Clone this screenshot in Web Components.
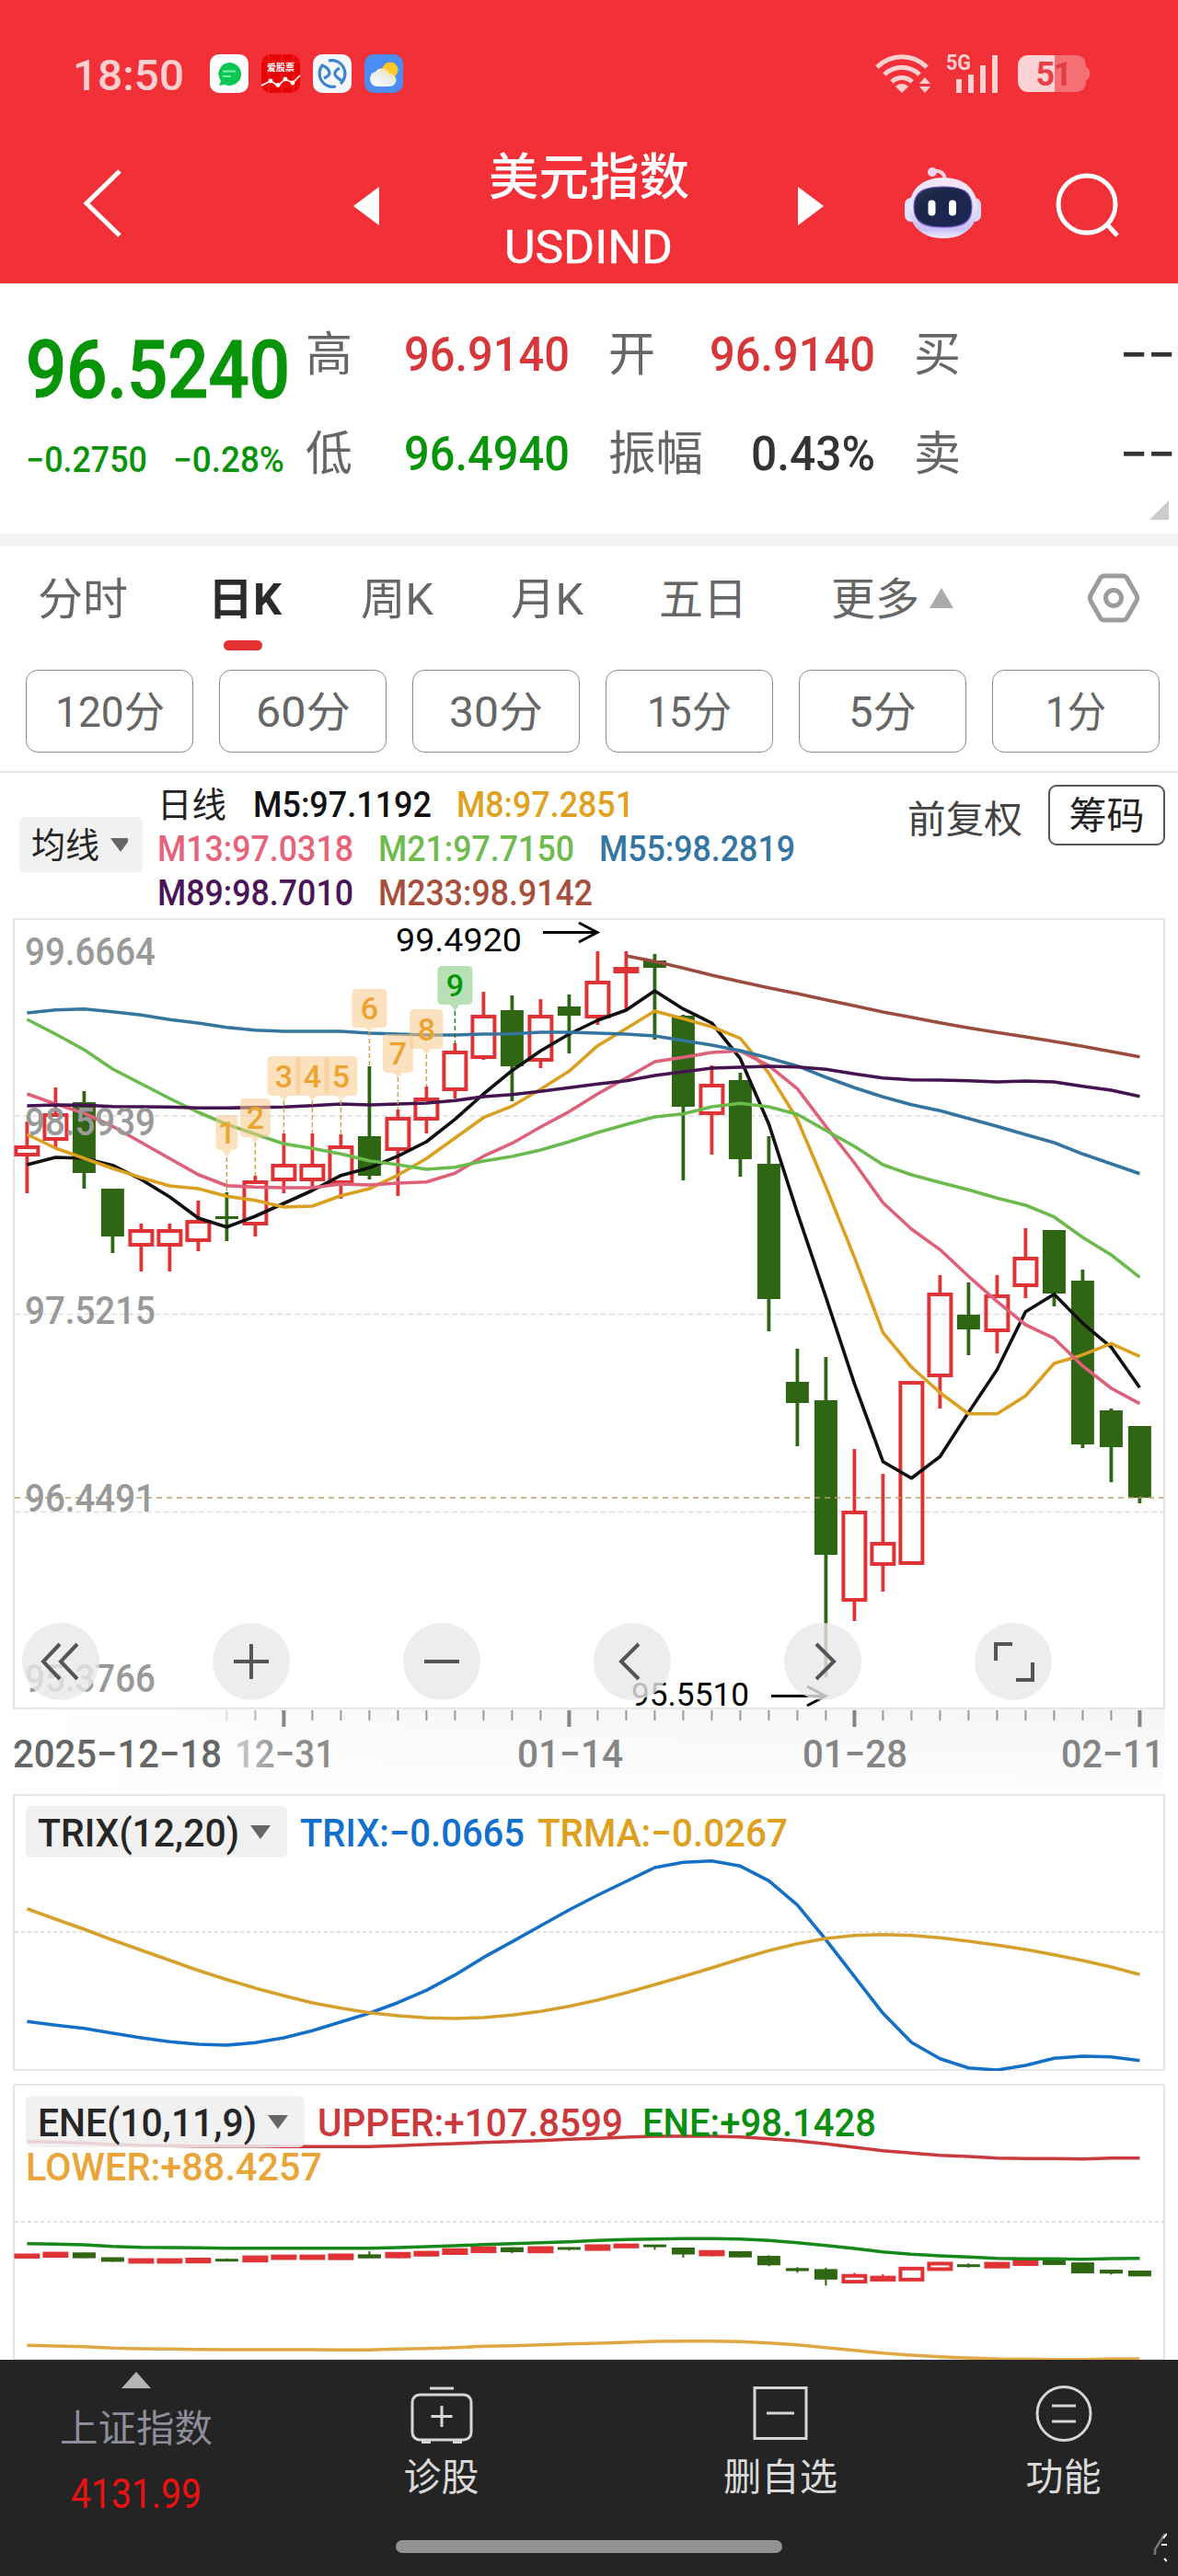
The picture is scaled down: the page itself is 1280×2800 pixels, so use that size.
<!DOCTYPE html>
<html lang="zh-CN">
<head>
<meta charset="utf-8">
<title>美元指数 USDIND</title>
<style>
    body {
        background: #fff;
        font-family: Roboto, "Noto Sans CJK SC", sans-serif;
        margin: 0;
        width: 1280px;
    }
</style>
</head>
<body>

<quote-app></quote-app>

<script>
const STEP = 31
const FIRST = 29.4
const px = i => FIRST + STEP * i

const RED = '#df3336'
const GREEN = '#2f6614'

// high, body top, body bottom, low, up (1) or down (0)
const candles = [
    [1219, 1245, 1257, 1297, 1], [1182, 1210, 1240, 1247, 1], [1186, 1198, 1275, 1292, 0], [1292, 1292, 1344, 1362, 0],
    [1330, 1336, 1355, 1382, 1], [1330, 1336, 1355, 1382, 1], [1305, 1326, 1350, 1360, 1], [1296, 1322, 1325, 1349, 0],
    [1278, 1283, 1332, 1344, 1], [1232, 1265, 1284, 1297, 1], [1232, 1265, 1284, 1292, 1], [1233, 1245, 1287, 1303, 1],
    [1159, 1235, 1278, 1282, 0], [1206, 1214, 1251, 1300, 1], [1181, 1193, 1218, 1232, 1], [1134, 1142, 1186, 1194, 1],
    [1078, 1103, 1151, 1152, 1], [1082, 1098, 1159, 1197, 0], [1086, 1103, 1154, 1161, 1], [1081, 1094, 1104, 1145, 0],
    [1034, 1066, 1107, 1114, 1], [1034, 1051, 1058, 1098, 1], [1037, 1044, 1052, 1130, 0], [1103, 1104, 1203, 1283, 0],
    [1158, 1178, 1212, 1255, 1], [1166, 1174, 1260, 1279, 0], [1235, 1265, 1412, 1447, 0], [1466, 1502, 1525, 1572, 0],
    [1475, 1522, 1690, 1823, 0], [1575, 1642, 1741, 1762, 1], [1602, 1676, 1702, 1730, 1], [1501, 1501, 1701, 1701, 1],
    [1386, 1405, 1497, 1531, 1], [1394, 1429, 1445, 1473, 0], [1386, 1407, 1448, 1471, 1], [1335, 1366, 1399, 1411, 1],
    [1337, 1337, 1406, 1420, 0], [1380, 1392, 1570, 1574, 0], [1531, 1533, 1573, 1611, 0], [1550, 1550, 1628, 1634, 0]
]

// line values are stored in thirds of a pixel below the pane origin
const averages = [
    { color: '#9c4c3f', from: 21, y: [147, 165, 187, 210, 231, 251, 270, 290, 310, 330, 347, 365, 382, 397, 411, 426, 442, 459, 476] },
    { color: '#101010', from: 0, y: [828, 804, 807, 830, 876, 933, 1002, 1031, 996, 954, 912, 863, 838, 800, 753, 680, 597, 521, 457, 402, 357, 324, 261, 320, 366, 482, 695, 985, 1260, 1542, 1796, 1850, 1780, 1636, 1496, 1307, 1250, 1345, 1423, 1555] },
    { color: '#dba01f', from: 0, y: [729, 774, 807, 840, 870, 897, 906, 931, 944, 966, 963, 929, 906, 862, 808, 741, 674, 637, 582, 523, 440, 384, 327, 352, 378, 416, 530, 680, 900, 1130, 1375, 1488, 1571, 1640, 1640, 1582, 1476, 1448, 1411, 1453] },
    { color: '#de6079', from: 0, y: [597, 630, 660, 703, 755, 808, 860, 896, 901, 903, 903, 891, 894, 888, 884, 856, 800, 758, 705, 655, 597, 545, 492, 478, 462, 457, 505, 580, 703, 822, 952, 1038, 1105, 1192, 1274, 1350, 1394, 1484, 1557, 1607] },
    { color: '#6bba4c', from: 0, y: [354, 402, 453, 516, 564, 612, 657, 696, 728, 760, 775, 793, 815, 828, 843, 836, 816, 801, 780, 753, 723, 697, 672, 662, 639, 628, 639, 664, 716, 768, 828, 861, 886, 910, 937, 960, 998, 1065, 1122, 1195] },
    { color: '#34759f', from: 0, y: [333, 323, 320, 329, 340, 355, 366, 380, 389, 393, 393, 393, 399, 402, 405, 405, 402, 401, 396, 396, 399, 402, 408, 423, 438, 456, 480, 506, 543, 577, 607, 632, 652, 677, 703, 730, 756, 793, 825, 857] },
    { color: '#441350', from: 0, y: [636, 633, 634, 638, 639, 640, 643, 643, 641, 640, 635, 630, 633, 630, 627, 619, 606, 599, 589, 577, 565, 554, 537, 525, 513, 510, 507, 509, 517, 532, 545, 551, 552, 554, 558, 555, 558, 572, 585, 605] }
]

const trixLines = [
    { color: '#146fc6', from: 0, y: [772, 784, 794, 810, 825, 838, 846, 849, 841, 825, 802, 773, 745, 710, 670, 620, 563, 512, 460, 408, 360, 315, 270, 253, 248, 265, 313, 392, 505, 625, 745, 840, 893, 923, 930, 915, 892, 885, 887, 899] },
    { color: '#d6a02c', from: 0, y: [404, 438, 471, 506, 539, 572, 605, 635, 663, 688, 711, 728, 743, 753, 760, 762, 759, 751, 739, 722, 702, 678, 652, 625, 597, 568, 541, 518, 501, 491, 488, 491, 499, 510, 523, 537, 554, 573, 594, 619] }
]

const eneLines = [
    { color: '#c9393e', from: 0, y: [203, 205, 208, 213, 216, 217, 218, 218, 218, 220, 220, 220, 220, 217, 213, 210, 206, 203, 200, 196, 193, 189, 186, 186, 186, 188, 194, 201, 211, 222, 233, 241, 248, 252, 257, 259, 259, 260, 257, 257] },
    { color: '#16881a', from: 0, y: [536, 538, 540, 545, 548, 549, 550, 551, 551, 551, 551, 551, 551, 549, 546, 543, 539, 536, 533, 530, 526, 523, 521, 520, 520, 521, 526, 533, 542, 552, 563, 571, 576, 580, 584, 586, 586, 587, 585, 584] },
    { color: '#e0a844', from: 0, y: [868, 870, 872, 877, 879, 880, 881, 882, 882, 882, 882, 883, 883, 880, 878, 875, 871, 869, 866, 863, 861, 858, 855, 854, 854, 856, 860, 866, 875, 884, 893, 900, 905, 909, 912, 913, 914, 914, 912, 912] }
]

// digit, candle index, top, shoulder, tip, width
const badges = [
    [1, 7, 1212, 1250, 1258, 24], [2, 8, 1194, 1236, 1242, 33], [3, 9, 1148, 1191, 1196, 36],
    [4, 10, 1148, 1191, 1196, 36], [5, 11, 1148, 1191, 1196, 36], [6, 12, 1075, 1117, 1121, 38],
    [7, 13, 1124, 1166, 1171, 33], [8, 14, 1097, 1140, 1146, 36], [9, 15, 1050, 1092, 1099, 38]
]

const drawLines = (lines, origin) => lines.map(l =>
    `<polyline fill="none" stroke="${l.color}" stroke-width="3.6" stroke-linejoin="round" points="${l.y.map((v, i) => `${px(i + l.from).toFixed(1)},${(origin + v / 3).toFixed(1)}`).join(' ')}"/>`
).join('')

const drawCandles = (list, wick, border) => list.map(([h, t, b, l, up], i) => {
    const x = px(i)
    if (!up) {
        return `<path stroke="${GREEN}" stroke-width="${wick}" d="M${x} ${h}V${l}"/>
            <rect x="${x - 12.5}" y="${t}" width="25" height="${Math.max(b - t, 3)}" fill="${GREEN}"/>`
    }
    const half = border / 2
    return `<path stroke="${RED}" stroke-width="${wick}" d="M${x} ${h}V${t + half}M${x} ${b - half}V${l}"/>
        <rect x="${x - 13 + half / 2}" y="${t + half}" width="${26 - half}" height="${Math.max(b - t - border, 1)}" fill="none" stroke="${RED}" stroke-width="${border}"/>`
}).join('')

// x, baseline, width, size, colour
const label = (text, x, y, w, size, color, weight = 400) =>
    `<text x="${x}" y="${y}" textLength="${w}" lengthAdjust="spacingAndGlyphs" font-size="${size}" font-weight="${weight}" fill="${color}">${text}</text>`


class BaseElement extends HTMLElement {

    constructor() {
        super()
        this.shadow = this.attachShadow({ mode: 'open' })
    }

    connectedCallback() {
        this.render()
    }
}


// Text squeezed or stretched to a given width
class FitText extends BaseElement {

    render() {
        const size = this.getAttribute('size')
        this.shadow.innerHTML =
            /*html*/
            `
            <style>
                :host{
                display: block;
                flex: none;
                font-size: ${size}px;
                line-height: 1.2;
                white-space: nowrap;
                }

                span{
                display: inline-block;
                transform: translateY(2px);
                transform-origin: 0 50%;
                vertical-align: top;
                }
            </style>
            <span><slot></slot></span>
            `
        const w = Number(this.getAttribute('w'))
        if (!w) return
        const span = this.shadow.querySelector('span')
        const natural = span.getBoundingClientRect().width
        this.style.width = w + 'px'
        if (natural) span.style.transform = `translateY(2px) scaleX(${w / natural})`
    }
}


class StatusBar extends BaseElement {

    render() {
        this.shadow.innerHTML =
            /*html*/
            `
            <style>
                :host{
                align-items: center;
                box-sizing: border-box;
                color: #fccfd1;
                display: flex;
                height: 160px;
                padding: 0 96px 0 79px;
                }

                svg{
                overflow: visible;
                }

                .apps{
                display: flex;
                gap: 14px;
                margin-left: 26px;
                }

                .system{
                align-items: center;
                display: flex;
                margin-left: auto;
                }

                .mobile{
                margin: 0 20px 0 17px;
                }
            </style>

            <fit-text w="121" size="47" style="font-weight: 500">18:50</fit-text>
            <div class="apps" style="margin-left: 28px">
                <svg width="42" height="42" viewBox="0 0 42 42">
                    <rect width="42" height="42" rx="10" fill="#fff"/>
                    <path d="M21 9a13 12.500 0 1 1-5 24l-6 1 2-5A12.500 12.500 0 0 1 21 9z" fill="#08c755"/>
                    <path d="M14 18.500h14M14 24h9" stroke="#86ebac" stroke-width="2"/>
                </svg>
                <svg width="42" height="42" viewBox="0 0 42 42">
                    <rect width="42" height="42" rx="10" fill="#e70606"/>
                    <path d="M0 8h42M0 34h42M8 0v42M22 0v42M35 0v42" stroke="#f33" stroke-width=".6"/>
                    <text x="6" y="18" textLength="30" lengthAdjust="spacingAndGlyphs" font-size="10" font-weight="700" fill="#fff">爱股票</text>
                    <path d="M0 34l10-5 8 5 8-7 8 4 8-8" fill="none" stroke="#fff" stroke-width="1.600"/>
                    <g fill="#fff"><circle cx="10" cy="29" r="2.400"/><circle cx="18" cy="33.500" r="2.400"/><circle cx="26" cy="27" r="2.400"/><circle cx="34" cy="31" r="2.400"/></g>
                </svg>
                <svg width="42" height="42" viewBox="0 0 42 42">
                    <rect width="42" height="42" rx="10" fill="#f6f8fc"/>
                    <path d="M17 7a14.500 14.500 0 0 1 13 25M25 35A14.500 14.500 0 0 1 11 11" fill="none" stroke="#3e84cf" stroke-width="3.200"/>
                    <path d="M10 12c5 2 8 5 8 9q-1 3-6 5" fill="none" stroke="#3e84cf" stroke-width="3.200"/>
                    <path d="M29 15q-6 3-5 7 2 4 8 7" fill="none" stroke="#3e84cf" stroke-width="3.200"/>
                </svg>
                <svg width="42" height="42" viewBox="0 0 42 42">
                    <defs>
                        <linearGradient id="cloud" x1="1" y1="0" x2="0" y2="1">
                            <stop offset="0" stop-color="#ffd977"/><stop offset=".5" stop-color="#e9efef"/><stop offset="1" stop-color="#fff"/>
                        </linearGradient>
                    </defs>
                    <rect width="42" height="42" rx="10" fill="#4b8cf2"/>
                    <circle cx="28" cy="17" r="8.500" fill="#ffc928"/>
                    <path d="M14 35a8 8 0 0 1-8-8 8 8 0 0 1 6-8 8.500 8.500 0 0 1 15 2 7 7 0 0 1 1 14z" fill="url(#cloud)"/>
                </svg>
            </div>
            <div class="system">
                <svg width="60" height="44" viewBox="0 0 60 44" fill="none" stroke="#fccfd1">
                    <path d="M2 15a38 38 0 0 1 54 0" stroke-width="5"/>
                    <path d="M10 23a27 27 0 0 1 38 0" stroke-width="5"/>
                    <path d="M18 31a16 16 0 0 1 22 0" stroke-width="5"/>
                    <path d="M22 36q7-6 14 0l-7 7z" fill="#fccfd1" stroke="none"/>
                    <path d="M48 33l6-7 6 7zM48 36l6 7 6-7z" fill="#fccfd1" stroke="none"/>
                </svg>
                <svg class="mobile" width="58" height="44" viewBox="0 0 58 44">
                    <text x="0" y="18" textLength="27" lengthAdjust="spacingAndGlyphs" font-size="24" font-weight="700" fill="#fccfd1">5G</text>
                    <path d="M14 43V28M27 43V23M40 43V13M53 43V2" stroke="#fccfd1" stroke-width="6"/>
                </svg>
                <svg width="78" height="40" viewBox="0 0 78 40">
                    <path d="M11 0h29v40H11A11 11 0 0 1 0 29V11A11 11 0 0 1 11 0z" fill="#fdd3d5"/>
                    <path d="M40 0h24a10 10 0 0 1 10 10v3q4 0 4 7t-4 7v3a10 10 0 0 1-10 10H40z" fill="#f67076"/>
                    <text x="19.500" y="33" font-size="36" font-weight="700" fill="#ea3d45">5</text>
                    <text x="38.500" y="33" font-size="36" font-weight="700" fill="#e33c44">1</text>
                </svg>
            </div>
            `
    }
}


class NavBar extends BaseElement {

    render() {
        this.shadow.innerHTML =
            /*html*/
            `
            <style>
                :host{
                align-items: center;
                box-sizing: border-box;
                color: #fff;
                display: flex;
                height: 148px;
                padding: 0 62px 11px 89px;
                }

                svg{
                display: block;
                flex: none;
                }

                .title{
                align-items: center;
                display: flex;
                flex-direction: column;
                width: 455px;
                }
            </style>

            <svg width="44" height="76" viewBox="0 0 44 76" style="margin: -16px 251px 0 0">
                <path d="M41 3L5 38l36 35" fill="none" stroke="#fff" stroke-width="5"/>
            </svg>
            <svg width="28" height="42" viewBox="0 0 28 42" style="margin-top: -9px"><path d="M28 0v42L0 21z" fill="#fff"/></svg>
            <div class="title">
                <fit-text w="218" size="54" style="font-weight: 500">美元指数</fit-text>
                <fit-text w="183" size="50" style="margin-top: 12px; -webkit-text-stroke: .5px #fff">USDIND</fit-text>
            </div>
            <svg width="28" height="42" viewBox="0 0 28 42" style="margin-top: -9px"><path d="M0 0v42l28-21z" fill="#fff"/></svg>
            <svg width="86" height="80" viewBox="0 0 86 80" style="margin: -15px 0 0 87px">
                <defs>
                    <linearGradient id="head" x1="0" y1="0" x2="0" y2="1">
                        <stop offset="0" stop-color="#f6e6f6"/><stop offset=".5" stop-color="#e6e4fb"/><stop offset=".85" stop-color="#c9bff6"/><stop offset="1" stop-color="#f3eefb"/>
                    </linearGradient>
                    <linearGradient id="face" x1="0" y1="0" x2="1" y2="1">
                        <stop offset="0" stop-color="#2a3558"/><stop offset=".3" stop-color="#1b2548"/><stop offset="1" stop-color="#1d2858"/>
                    </linearGradient>
                </defs>
                <path d="M31 5q13-2 14 10" fill="none" stroke="#f6d0e2" stroke-width="4"/>
                <circle cx="31" cy="6" r="5" fill="#ead5f2"/>
                <rect x="1" y="34" width="14" height="26" rx="7" fill="#e6e2fb"/>
                <rect x="70" y="34" width="14" height="26" rx="7" fill="#dcd6f9"/>
                <path d="M43 12c24 0 37 14 37 33S67 78 43 78 6 64 6 45s13-33 37-33z" fill="url(#head)"/>
                <path d="M43 22c21 0 31 5 31 22S64 66 43 66 11 61 11 44s11-22 32-22z" fill="url(#face)" stroke="#7358c9" stroke-width="1.200"/>
                <path d="M30.500 40.500v9M53 40.500v9" stroke="#fff" stroke-width="8" stroke-linecap="round"/>
            </svg>
            <svg width="72" height="70" viewBox="0 0 72 70" style="margin: -11px 0 0 auto">
                <circle cx="35" cy="34" r="31" fill="none" stroke="#fff" stroke-width="5"/>
                <path d="M57 56l11 12" stroke="#fff" stroke-width="5"/>
            </svg>
            `
    }
}


class QuotePanel extends BaseElement {

    render() {
        this.shadow.innerHTML =
            /*html*/
            `
            <style>
                :host{
                border-bottom: 14px solid #f4f4f4;
                box-sizing: border-box;
                color: #333;
                display: block;
                height: 286px;
                padding: 22px 0 0 28px;
                position: relative;
                }

                .row{
                align-items: center;
                display: grid;
                grid-template-columns: 304px 287px 42px 290px 42px 284px;
                grid-template-rows: 108px;
                }

                .cell{
                align-items: center;
                display: flex;
                justify-content: space-between;
                }

                .cell:nth-child(3){ grid-column: 4; }
                .cell:nth-child(4){ grid-column: 6; }

                .name{ color: #666; }
                .value{ font-weight: 500; }
                .up{ color: #d5373a; }
                .down{ color: #089408; }

                .price{
                -webkit-text-stroke: 1.200px;
                font-weight: 500;
                padding-top: 32px;
                }

                .change{
                display: flex;
                gap: 28px;
                padding-top: 14px;
                }

                .corner{
                bottom: 15px;
                position: absolute;
                right: 10px;
                }
            </style>

            <div class="row">
                <fit-text class="price down" w="287" size="88">96.5240</fit-text>
                <div class="cell"><fit-text class="name" size="51">高</fit-text><fit-text class="value up" w="180" size="51">96.9140</fit-text></div>
                <div class="cell"><fit-text class="name" size="51">开</fit-text><fit-text class="value up" w="180" size="51">96.9140</fit-text></div>
                <div class="cell"><fit-text class="name" size="51">买</fit-text><fit-text class="value" w="60" size="51">−−</fit-text></div>
            </div>
            <div class="row">
                <div class="change down">
                    <fit-text w="132" size="38" style="font-weight: 500">−0.2750</fit-text>
                    <fit-text w="121" size="38" style="font-weight: 500">−0.28%</fit-text>
                </div>
                <div class="cell"><fit-text class="name" size="51">低</fit-text><fit-text class="value down" w="180" size="51">96.4940</fit-text></div>
                <div class="cell"><fit-text class="name" w="103" size="51">振幅</fit-text><fit-text class="value" w="135" size="51">0.43%</fit-text></div>
                <div class="cell"><fit-text class="name" size="51">卖</fit-text><fit-text class="value" w="60" size="51">−−</fit-text></div>
            </div>
            <svg class="corner" width="21" height="21"><path d="M21 0v21H0z" fill="#ccc"/></svg>
            `
    }
}


class PeriodTabs extends BaseElement {

    render() {
        const minutes = [['120分', 119], ['60分', 103], ['30分', 102], ['15分', 92], ['5分', 74], ['1分', 66]]
        this.shadow.innerHTML =
            /*html*/
            `
            <style>
                :host{
                border-bottom: 2px solid #e6e6e6;
                box-sizing: border-box;
                color: #666;
                display: flow-root;
                height: 246px;
                }

                .tabs{
                align-items: center;
                box-sizing: border-box;
                display: flex;
                height: 114px;
                padding: 0 41px 2px;
                }

                .active{
                color: #2b2b2b;
                font-weight: 700;
                position: relative;
                }

                .active::after{
                background: #e33030;
                border-radius: 6px;
                bottom: -28px;
                content: '';
                height: 11px;
                left: 17px;
                position: absolute;
                width: 42px;
                }

                .minutes{
                display: grid;
                gap: 28px;
                grid-template-columns: repeat(6, 182px);
                margin: 20px 0 0 28px;
                }

                .minutes div{
                align-items: center;
                border: 1.500px solid #8c8c8c;
                border-radius: 13px;
                box-sizing: border-box;
                display: flex;
                height: 90px;
                justify-content: center;
                }
            </style>

            <div class="tabs">
                <fit-text w="98" size="48">分时</fit-text>
                <fit-text class="active" w="80" size="48" style="margin-left: 87px">日K</fit-text>
                <fit-text w="79" size="48" style="margin-left: 86px">周K</fit-text>
                <fit-text w="79" size="48" style="margin-left: 84px">月K</fit-text>
                <fit-text w="96" size="48" style="margin-left: 82px">五日</fit-text>
                <fit-text w="96" size="48" style="margin-left: 91px">更多</fit-text>
                <svg width="26" height="22" style="margin: 0 0 0 11px"><path d="M13 0l13 22H0z" fill="#ababab"/></svg>
                <svg width="58" height="54" viewBox="0 0 58 54" fill="none" stroke="#9c9c9c" stroke-width="5" style="margin-left: auto">
                    <path d="M19 3h20q3 0 4.500 2.500L54 24q1.500 3 0 6L43.500 48.500Q42 51 39 51H19q-3 0-4.500-2.500L4 30q-1.500-3 0-6L14.500 5.500Q16 3 19 3z"/>
                    <circle cx="29" cy="27" r="8.500"/>
                </svg>
            </div>
            <div class="minutes">
                ${minutes.map(([t, w]) => `<div><fit-text w="${w}" size="46">${t}</fit-text></div>`).join('')}
            </div>
            `
    }
}


// Grey pill with a drop-down arrow
class DropButton extends BaseElement {

    render() {
        this.shadow.innerHTML =
            /*html*/
            `
            <style>
                :host{
                align-items: center;
                background: rgba(238, 238, 238, .85);
                border-radius: 6px;
                box-sizing: border-box;
                color: #262626;
                display: flex;
                flex: none;
                gap: 12px;
                padding: 0 16px 0 13px;
                }
            </style>
            <slot></slot>
            <svg width="22" height="15"><path d="M0 0h22L11 15z" fill="#666"/></svg>
            `
    }
}


class AverageLegend extends BaseElement {

    render() {
        this.shadow.innerHTML =
            /*html*/
            `
            <style>
                :host{
                box-sizing: border-box;
                display: flex;
                height: 158px;
                padding: 10px 14px 0 21px;
                }

                drop-button{
                height: 60px;
                margin-top: 38px;
                width: 134px;
                }

                .lines{
                flex: 1;
                font-weight: 500;
                margin-left: 16px;
                }

                .lines div{
                align-items: center;
                display: flex;
                gap: 27px;
                height: 48px;
                }

                .right{
                align-items: center;
                color: #444;
                display: flex;
                gap: 28px;
                height: 64px;
                margin-top: 4px;
                }

                .chips{
                align-items: center;
                border: 2px solid #555;
                border-radius: 9px;
                box-sizing: border-box;
                color: #222;
                display: flex;
                height: 66px;
                justify-content: center;
                width: 127px;
                }
            </style>

            <drop-button><fit-text w="74" size="38">均线</fit-text></drop-button>
            <div class="lines">
                <div><fit-text w="75" size="38" style="color: #222; font-weight: 400">日线</fit-text><fit-text w="194" size="38" style="color: #111; margin-left: 2px">M5:97.1192</fit-text><fit-text w="193" size="38" style="color: #dfa11e">M8:97.2851</fit-text></div>
                <div><fit-text w="213" size="38" style="color: #e6637b">M13:97.0318</fit-text><fit-text w="213" size="38" style="color: #6fbb50">M21:97.7150</fit-text><fit-text w="213" size="38" style="color: #3475a2">M55:98.2819</fit-text></div>
                <div><fit-text w="213" size="38" style="color: #4a1458">M89:98.7010</fit-text><fit-text w="233" size="38" style="color: #a84e3c">M233:98.9142</fit-text></div>
            </div>
            <div class="right">
                <fit-text w="125" size="41" style="padding-top: 8px">前复权</fit-text>
                <div class="chips"><fit-text w="82" size="41">筹码</fit-text></div>
            </div>
            `
    }
}


class KChart extends BaseElement {

    render() {
        const marks = badges.map(([n, i, top, sh, tip, w]) => {
            const x = px(i), l = x - w / 2, r = x + w / 2
            const green = n === 9
            const color = green ? '#069606' : '#eda32e'
            return `
                <path d="M${x} ${tip}V${candles[i][0]}" stroke="${green ? '#2f7a2f' : '#c9a84c'}" stroke-width="1.500" stroke-dasharray="5 3"/>
                <path d="M${l + 5} ${top}H${r - 5}Q${r} ${top} ${r} ${top + 5}V${sh - 5}Q${r} ${sh} ${r - 5} ${sh}L${x + 5} ${sh}L${x} ${tip}L${x - 5} ${sh}H${l + 5}Q${l} ${sh} ${l} ${sh - 5}V${top + 5}Q${l} ${top} ${l + 5} ${top}z" fill="${green ? '#7cc67c' : '#fac88a'}" opacity=".55"/>
                <text x="${x}" y="${(top + sh) / 2 + 12}" text-anchor="middle" font-size="34" font-weight="500" fill="${color}">${n}</text>`
        }).join('')

        const scale = [['99.6664', 1049], ['98.5939', 1234], ['97.5215', 1439], ['96.4491', 1643], ['95.3766', 1839]]
            .map(([t, y]) => label(t, 27, y, 142, 42, '#999', 500)).join('')

        const tools = [
            '<path d="M-1-19l-18 19 18 19M18-19L0 0l18 19"/>',
            '<path d="M-19 0h38M0-19v38"/>',
            '<path d="M-19 0h38"/>',
            '<path d="M7-19l-19 19 19 19"/>',
            '<path d="M-7-19l19 19-19 19"/>',
            '<path d="M-19-1v-18h18M21 1v19H3"/>'
        ]

        this.shadow.innerHTML =
            /*html*/
            `
            <style>
                :host{
                display: block;
                height: 860px;
                position: relative;
                }

                svg{
                display: block;
                overflow: visible;
                }

                .tools{
                bottom: 10px;
                display: flex;
                gap: 123px;
                left: 24px;
                position: absolute;
                }

                .tools svg{
                background: rgba(232, 232, 232, .8);
                border-radius: 50%;
                }
            </style>

            <svg width="1280" height="860" viewBox="0 998 1280 860">
                <rect x="15" y="999" width="1250" height="858" fill="none" stroke="#e6e6e6" stroke-width="2"/>
                <path d="M16 1213H1264M16 1428.500H1264M16 1643.500H1264" stroke="#dedede" stroke-width="1.500" stroke-dasharray="6 3.500"/>
                ${drawCandles(candles, 3.8, 4)}
                ${drawLines(averages, 990)}
                <path d="M16 1628H1264" stroke="#b5a468" stroke-width="1.600" stroke-dasharray="6 5"/>
                ${scale}
                ${marks}
                ${label('99.4920', 430, 1034, 137, 35, '#000')}
                <path d="M590 1013.500h58M629 1003l20 10.500-20 10.500" fill="none" stroke="#000" stroke-width="3"/>
                ${label('95.5510', 686, 1854, 128, 35, '#000')}
                <path d="M838 1843.500h58M877 1833l20 10.500-20 10.500" fill="none" stroke="#000" stroke-width="3"/>
            </svg>
            <div class="tools">
                ${tools.map(t => `<svg width="84" height="84" viewBox="-42 -42 84 84" fill="none" stroke="#555" stroke-width="4">${t}</svg>`).join('')}
            </div>
            `
    }
}


class DateAxis extends BaseElement {

    render() {
        let ticks = ''
        for (let i = 7; i < 40; i++) {
            const major = i % 10 === 9
            ticks += `<path d="M${px(i)} 1v${major ? 18 : 11}" stroke="${major ? '#858585' : '#999'}" stroke-width="${major ? 4 : 2}" opacity="${i === 7 ? .3 : i === 8 ? .7 : 1}"/>`
        }
        this.shadow.innerHTML =
            /*html*/
            `
            <style>
                :host{
                display: block;
                height: 92px;
                }

                svg{
                display: block;
                }
            </style>

            <svg width="1280" height="92">
                <defs>
                    <linearGradient id="fade"><stop offset="0" stop-color="#fff"/><stop offset=".35" stop-color="#f8f8f8"/><stop offset="1" stop-color="#f5f5f5"/></linearGradient>
                    <linearGradient id="down" x2="0" y2="1"><stop offset="0" stop-color="#fff" stop-opacity="0"/><stop offset="1" stop-color="#fff" stop-opacity=".8"/></linearGradient>
                    <linearGradient id="text"><stop offset="0" stop-color="#ccc"/><stop offset=".5" stop-color="#8c8c8c"/></linearGradient>
                </defs>
                <rect x="15" width="1250" height="92" fill="url(#fade)"/>
                <rect x="15" width="1250" height="92" fill="url(#down)"/>
                ${ticks}
                ${label('2025−12−18', 14, 63, 227, 42, '#666', 500)}
                ${label('12−31', 255, 63, 109, 42, 'url(#text)', 500)}
                ${label('01−14', 562, 63, 115, 42, '#858585', 500)}
                ${label('01−28', 872, 63, 114, 42, '#858585', 500)}
                ${label('02−11', 1153, 63, 112, 42, '#858585', 500)}
            </svg>
            `
    }
}


// Frame, middle line and curves of an indicator; the legend is slotted over it
class IndicatorPane extends BaseElement {

    render() {
        const ene = this.getAttribute('kind') === 'ene'
        const origin = ene ? 2260 : 1940
        const top = ene ? 2266 : 1951
        const toPane = y => 2444 + (y - 1104) * .056
        const small = candles.map(([h, t, b, l, up]) => {
            const pad = up ? 2.4 : 1
            return [toPane(h), toPane(t) - pad, toPane(b) + pad, toPane(l), up]
        })
        this.shadow.innerHTML =
            /*html*/
            `
            <style>
                :host{
                display: block;
                height: 301px;
                overflow: hidden;
                position: relative;
                }

                svg{
                left: 0;
                position: absolute;
                top: 0;
                }

                .legend{
                box-sizing: border-box;
                font-weight: 500;
                padding: 13px 0 0 28px;
                position: relative;
                }
            </style>

            <svg width="1280" height="301" viewBox="0 ${top - 1} 1280 301">
                <rect x="15" y="${top}" width="1250" height="299" fill="none" stroke="#e6e6e6" stroke-width="2"/>
                <path d="M16 ${top + 149}H1264" stroke="#d4ddd4" stroke-width="1.500" stroke-dasharray="4 3"/>
                ${ene ? drawCandles(small, 2, 4) : ''}
                ${drawLines(ene ? eneLines : trixLines, origin)}
            </svg>
            <div class="legend"><slot></slot></div>
            `
    }
}


class BottomBar extends BaseElement {

    render() {
        this.shadow.innerHTML =
            /*html*/
            `
            <style>
                :host{
                background: #242424;
                box-sizing: border-box;
                color: #d9d9d9;
                display: block;
                height: 235px;
                position: relative;
                }

                .items{
                display: grid;
                grid-template-columns: 295px 369px 367px 249px;
                height: 196px;
                }

                .item{
                align-items: center;
                display: flex;
                flex-direction: column;
                }

                .item svg{
                display: block;
                }

                .home{
                background: #929292;
                border-radius: 7px;
                height: 14px;
                margin: 0 auto;
                width: 420px;
                }

                .edge{
                bottom: 15px;
                position: absolute;
                right: 12px;
                }
            </style>

            <div class="items">
                <div class="item">
                    <svg width="32" height="18" style="margin-top: 13px"><path d="M16 0l16 18H0z" fill="#b5b5b5"/></svg>
                    <fit-text w="166" size="41" style="color: #8d8d9b; margin-top: 18px">上证指数</fit-text>
                    <fit-text w="142" size="44" style="color: #ef1111; margin-top: 20px">4131.99</fit-text>
                </div>
                <div class="item">
                    <svg width="68" height="64" viewBox="0 0 68 64" fill="none" stroke="#d6d6d6" stroke-width="3" style="margin-top: 28px">
                        <path d="M21 3h26"/>
                        <rect x="2" y="10" width="64" height="49" rx="8"/>
                        <path d="M34 22v23M22.500 33.500h23"/>
                        <path d="M12 61h10M46 61h10" stroke-width="4"/>
                    </svg>
                    <fit-text w="82" size="41" style="margin-top: 10px">诊股</fit-text>
                </div>
                <div class="item">
                    <svg width="60" height="64" viewBox="0 0 60 64" fill="none" stroke="#d6d6d6" stroke-width="3" style="margin-top: 28px">
                        <rect x="2" y="2.500" width="56" height="55"/>
                        <path d="M15 30h30"/>
                    </svg>
                    <fit-text w="124" size="41" style="margin-top: 10px">删自选</fit-text>
                </div>
                <div class="item">
                    <svg width="62" height="64" viewBox="0 0 62 64" fill="none" stroke="#d6d6d6" stroke-width="3" style="margin-top: 28px">
                        <circle cx="31" cy="30.500" r="29"/>
                        <path d="M18 22h26M18 39h26"/>
                    </svg>
                    <fit-text w="82" size="41" style="margin-top: 10px">功能</fit-text>
                </div>
            </div>
            <div class="home"></div>
            <svg class="edge" width="16" height="32" viewBox="0 0 16 32"><path d="M14 1L3 18v6" stroke="#777" stroke-width="2.500" fill="none"/><path d="M16 1l-4 5M10 13h6M13 28l3 3" stroke="#fff" stroke-width="2" fill="none"/></svg>
            `
    }
}


class QuoteApp extends BaseElement {

    render() {
        this.shadow.innerHTML =
            /*html*/
            `
            <style>
                :host{
                display: block;
                height: 2800px;
                overflow: hidden;
                }

                header{
                background: #f13037;
                }

                .legend-row{
                align-items: center;
                display: flex;
                gap: 14px;
                height: 56px;
                }

                indicator-pane + indicator-pane{
                height: 300px;
                margin-top: 14px;
                }
            </style>

            <header>
                <status-bar></status-bar>
                <nav-bar></nav-bar>
            </header>
            <quote-panel></quote-panel>
            <period-tabs></period-tabs>
            <average-legend></average-legend>
            <k-chart></k-chart>
            <date-axis></date-axis>
            <indicator-pane kind="trix">
                <div class="legend-row">
                    <drop-button style="height: 56px; width: 284px"><fit-text w="219" size="42">TRIX(12,20)</fit-text></drop-button>
                    <fit-text w="244" size="42" style="color: #116fcd">TRIX:−0.0665</fit-text>
                    <fit-text w="272" size="42" style="color: #dda01f">TRMA:−0.0267</fit-text>
                </div>
            </indicator-pane>
            <indicator-pane kind="ene">
                <div class="legend-row">
                    <drop-button style="height: 56px; width: 303px"><fit-text w="238" size="42">ENE(10,11,9)</fit-text></drop-button>
                    <fit-text w="332" size="42" style="color: #cb393d">UPPER:+107.8599</fit-text>
                    <fit-text w="254" size="42" style="color: #098f0d; margin-left: 7px">ENE:+98.1428</fit-text>
                </div>
                <fit-text w="322" size="42" style="color: #e9a537; margin-top: -5px">LOWER:+88.4257</fit-text>
            </indicator-pane>
            <bottom-bar></bottom-bar>
            `
    }
}

customElements.define('fit-text', FitText)
customElements.define('drop-button', DropButton)
customElements.define('status-bar', StatusBar)
customElements.define('nav-bar', NavBar)
customElements.define('quote-panel', QuotePanel)
customElements.define('period-tabs', PeriodTabs)
customElements.define('average-legend', AverageLegend)
customElements.define('k-chart', KChart)
customElements.define('date-axis', DateAxis)
customElements.define('indicator-pane', IndicatorPane)
customElements.define('bottom-bar', BottomBar)
customElements.define('quote-app', QuoteApp)
</script>
</body>
</html>
